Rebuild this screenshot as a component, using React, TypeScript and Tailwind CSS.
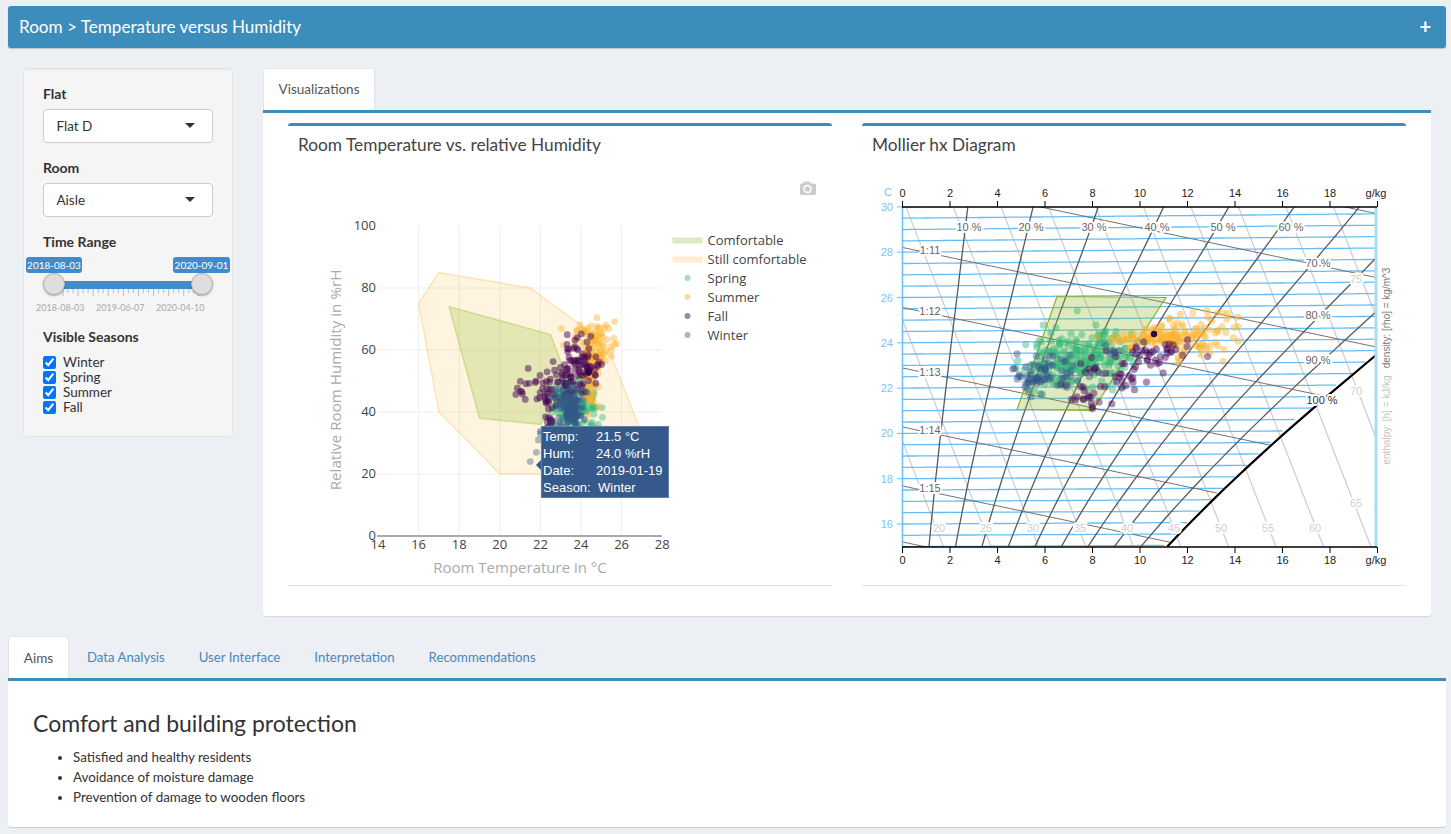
import React from "react";

function rng(seed: number) {
  let s = seed;
  return () => {
    s |= 0; s = (s + 0x6d2b79f5) | 0;
    let t = Math.imul(s ^ (s >>> 15), 1 | s);
    t = (t + Math.imul(t ^ (t >>> 7), 61 | t)) ^ t;
    return ((t ^ (t >>> 14)) >>> 0) / 4294967296;
  };
}
const r = rng(42);
const gauss = () => {
  const u = Math.max(r(), 1e-6), v = r();
  return Math.sqrt(-2 * Math.log(u)) * Math.cos(2 * Math.PI * v);
};
type Cl = [number, number, number, number, number];
const gen = (cls: Cl[]) => {
  const out: [number, number][] = [];
  cls.forEach(([cx, cy, sx, sy, n]) => {
    for (let i = 0; i < n; i++) out.push([cx + gauss() * sx, cy + gauss() * sy]);
  });
  return out;
};

const GREEN = "#35b779", ORANGE = "#fdb42f", PURPLE = "#440154", BLUE = "#34598a";

/* Left chart */
const LX = (t: number) => 378 + (t - 14) * 20.3;
const LY = (h: number) => 536 - h * 3.1;
const poly = (pts: number[][]) => pts.map(([a, b]) => `${LX(a)},${LY(b)}`).join(" ");
const L_SPRING = gen([[23.6, 42, 0.6, 4.2, 110], [23.2, 47, 0.35, 2, 18], [24.5, 41, 0.15, 4, 14]]);
const L_SUMMER = gen([[24.5, 56, 0.25, 5, 70], [24.9, 62, 0.55, 3.2, 50], [23.8, 65, 0.5, 2, 12], [24.5, 44, 0.15, 3, 10]]);
const L_FALL = gen([[23.8, 55, 0.55, 4.5, 85], [23, 47, 0.55, 2.4, 24], [21, 47, 0.25, 2.5, 8], [21.8, 51, 0.35, 2.2, 10], [22.4, 45, 0.35, 1.8, 12], [22.4, 37, 0.15, 2.5, 14]]);
const L_WINTER = gen([[23.5, 41, 0.3, 3.2, 110], [22.4, 33, 0.2, 3, 14], [23, 46, 0.2, 2, 8]]);

/* Mollier */
const MX = (g: number) => 902.5 + 23.75 * g;
const MY = (t: number) => 524 - (t - 16) * 22.65;
const xs = (T: number) => {
  const t = T - 15;
  return 11.15 * Math.exp(0.0798 * t - 0.00131 * t * t);
};
const TofY = (y: number) => (524 - y) / 22.65 + 16;
const rhPath = (rh: number) => {
  const p: string[] = [];
  for (let T = 15; T <= 31; T += 0.5) p.push(`${MX(rh * xs(T)).toFixed(1)},${MY(T).toFixed(1)}`);
  return p.join(" ");
};
const untilSat = (f: (g: number) => number) => {
  const p: string[] = [];
  for (let g = 0; g <= 20; g += 0.25) {
    const y = f(g);
    if (g > xs(TofY(y))) break;
    p.push(`${MX(g).toFixed(1)},${y.toFixed(1)}`);
  }
  return p.join(" ");
};
const ISO: string[] = [];
for (let T = 15; T <= 31; T += 0.5) ISO.push(untilSat((g) => MY(T) - (4.5 / 600) * T * g));
const DENS = [114, 178, 247.5, 307.5, 368, 427, 486, 542].map((y0) =>
  untilSat((g) => y0 + 0.21 * 23.75 * g)
);
const ENTH: number[] = [];
for (let h = 0; h <= 90; h += 5) ENTH.push(1228.6 + (h - 50) * 9.5);

const M_SPRING = gen([[1080, 358, 28, 15, 190], [1050, 372, 14, 11, 25], [1115, 340, 14, 6, 16]]);
const M_SUMMER = gen([[1160, 337, 18, 4, 80], [1198, 338, 20, 11, 60], [1210, 318, 14, 5, 10], [1130, 342, 14, 6, 12]]);
const M_FALL = gen([[1155, 352, 20, 6, 35], [1130, 375, 15, 10, 22], [1085, 398, 13, 7, 14], [1095, 375, 18, 12, 16]]);
const M_WINTER = gen([[1050, 372, 18, 10, 50], [1030, 378, 9, 6, 20], [1110, 345, 8, 6, 5]]);

const Dots = ({ pts, color, op = 0.45, rad = 3.4 }: { pts: [number, number][]; color: string; op?: number; rad?: number }) => (
  <g fill={color} fillOpacity={op}>
    {pts.map(([x, y], i) => (
      <circle key={i} cx={x} cy={y} r={rad} />
    ))}
  </g>
);
const toL = (p: [number, number][]) => p.map(([a, b]) => [LX(a), LY(b)] as [number, number]);

const LeftChart = () => (
  <div className="relative">
    <svg viewBox="288 170 544 416" width={544} height={416} className="block" style={{ fontFamily: "'Open Sans', sans-serif" }}>
      <g stroke="#eeeeee" strokeWidth={1}>
        {[16, 18, 20, 22, 24, 26].map((t) => (
          <line key={t} x1={LX(t)} x2={LX(t)} y1={226} y2={536} />
        ))}
        {[20, 40, 60, 80].map((h) => (
          <line key={h} x1={378} x2={662} y1={LY(h)} y2={LY(h)} />
        ))}
      </g>
      <polygon points={poly([[16, 75], [17, 85], [21.5, 80], [24, 68], [25.5, 58], [27, 33], [25, 20], [20, 20], [17, 40]])} fill="#fdb42f" fillOpacity={0.15} stroke="#fdb42f" strokeOpacity={0.3} strokeWidth={1.5} />
      <polygon points={poly([[17.5, 74], [22.5, 65], [23.5, 48], [22, 36], [19, 38]])} fill="#a6c84c" fillOpacity={0.3} stroke="#a6c84c" strokeOpacity={0.45} strokeWidth={1.5} />
      <Dots pts={toL(L_SPRING)} color={GREEN} />
      <Dots pts={toL(L_SUMMER)} color={ORANGE} />
      <Dots pts={toL(L_FALL)} color={PURPLE} op={0.5} />
      <Dots pts={toL(L_WINTER)} color={BLUE} />
      <Dots pts={[[LX(21.5), LY(24)], [LX(21.8), LY(27)], [LX(21.9), LY(31)], [LX(22), LY(33)]]} color={BLUE} op={0.4} />
      <circle cx={588.5} cy={372} r={3.4} fill="#2a0a4e" />
      <line x1={377} x2={662} y1={536} y2={536} stroke="#aaaaaa" strokeWidth={2} />
      <g fontSize={13} fill="#444444" textAnchor="end">
        {[0, 20, 40, 60, 80, 100].map((h) => (
          <text key={h} x={376} y={LY(h) + 4}>{h}</text>
        ))}
      </g>
      <g fontSize={13} fill="#444444" textAnchor="middle">
        {[14, 16, 18, 20, 22, 24, 26, 28].map((t) => (
          <text key={t} x={LX(t)} y={549}>{t}</text>
        ))}
      </g>
      <text x={520} y={573} textAnchor="middle" fontSize={15} fill="#aaaaaa">Room Temperature in °C</text>
      <text transform="translate(341 380) rotate(-90)" textAnchor="middle" fontSize={15.2} fill="#aaaaaa">Relative Room Humidity in %rH</text>
      <g fontSize={13} fill="#444444">
        {[
          ["Comfortable", 240], ["Still comfortable", 259], ["Spring", 278], ["Summer", 297], ["Fall", 316], ["Winter", 335],
        ].map(([t, y]) => (
          <text key={t as string} x={707.5} y={(y as number) + 5}>{t}</text>
        ))}
      </g>
      <rect x={672.5} y={237.5} width={30} height={6} fill="#dcebc0" />
      <rect x={672.5} y={256.5} width={30} height={6} fill="#fdeed2" />
      <circle cx={687.5} cy={278} r={3} fill="#a4dbc3" />
      <circle cx={687.5} cy={297} r={3} fill="#fedc9f" />
      <circle cx={687.5} cy={316} r={3} fill="#a285a9" />
      <circle cx={687.5} cy={335} r={3} fill="#a8b7cc" />
      <g fill="#cccccc">
        <path d="M803 183.5 l1.2 -2 h5.6 l1.2 2 h3.5 a1.5 1.5 0 0 1 1.5 1.5 v8.5 a1.5 1.5 0 0 1 -1.5 1.5 h-13 a1.5 1.5 0 0 1 -1.5 -1.5 v-8.5 a1.5 1.5 0 0 1 1.5 -1.5 z" />
      </g>
      <circle cx={807.5} cy={189} r={3.4} fill="none" stroke="#ffffff" strokeWidth={1.6} />
    </svg>
    <div className="absolute left-[253px] top-[256px] w-[128px] h-[72px] bg-[#34598a] border border-[#5f7fa8] text-white text-[13px] leading-[17px] pl-[1px] pt-[1px]" style={{ fontFamily: "'Liberation Sans', sans-serif" }}>
      <div className="flex"><span className="w-[53px]">Temp:</span><span>21.5 °C</span></div>
      <div className="flex"><span className="w-[53px]">Hum:</span><span>24.0 %rH</span></div>
      <div className="flex"><span className="w-[53px]">Date:</span><span>2019-01-19</span></div>
      <div className="flex"><span className="w-[55px]">Season:</span><span>Winter</span></div>
      <div className="absolute left-[-6px] top-[33px] w-0 h-0 border-y-[5px] border-y-transparent border-r-[5px] border-r-[#34598a]" />
    </div>
  </div>
);

const halo = { paintOrder: "stroke" as const, stroke: "#ffffff", strokeWidth: 4, strokeLinejoin: "round" as const };

const Mollier = () => {
  const ticks = [0, 2, 4, 6, 8, 10, 12, 14, 16, 18];
  return (
    <svg viewBox="862 170 544 416" width={544} height={416} className="block" style={{ fontFamily: "'Liberation Sans', sans-serif" }}>
      <defs>
        <clipPath id="mclip"><rect x={902.5} y={207} width={473.5} height={340} /></clipPath>
      </defs>
      <g clipPath="url(#mclip)" fill="none">
        {ENTH.map((x, i) => (
          <line key={i} x1={x} y1={547} x2={x - 0.39 * 400} y2={147} stroke="#cccccc" strokeWidth={1.2} />
        ))}
        {ISO.map((p, i) => (
          <polyline key={i} points={p} stroke="#66bef5" strokeWidth={1.3} />
        ))}
        {DENS.map((p, i) => (
          <polyline key={i} points={p} stroke="#707070" strokeWidth={1} />
        ))}
        {[0.1, 0.2, 0.3, 0.4, 0.5, 0.6, 0.7, 0.8, 0.9].map((rh) => (
          <polyline key={rh} points={rhPath(rh)} stroke="#5a5a5a" strokeWidth={1.3} />
        ))}
        <polyline points={rhPath(1)} stroke="#000000" strokeWidth={2.2} />
      </g>
      <polygon points="1057,296.5 1166,297.5 1092.5,410.5 1017,409.5" fill="#8db92e" fillOpacity={0.3} stroke="#8db32e" strokeWidth={1.2} />
      <Dots pts={M_SPRING} color={GREEN} rad={3.6} />
      <Dots pts={M_SUMMER} color={ORANGE} rad={3.6} />
      <Dots pts={M_FALL} color={PURPLE} rad={3.6} />
      <Dots pts={M_WINTER} color={BLUE} rad={3.6} />
      <circle cx={1154} cy={334} r={3.2} fill="#2a0a4e" />
      <line x1={902.5} x2={902.5} y1={207} y2={547} stroke="#66bef5" strokeWidth={1.5} />
      <line x1={1376} x2={1376} y1={207} y2={547} stroke="#a9dcf8" strokeWidth={3} />
      <line x1={902} x2={1377} y1={207} y2={207} stroke="#000000" strokeWidth={1.3} />
      <line x1={902} x2={1377} y1={547} y2={547} stroke="#000000" strokeWidth={1.3} />
      <g stroke="#000000" strokeWidth={1}>
        {[...ticks, 20].map((g) => (
          <React.Fragment key={g}>
            <line x1={MX(g)} x2={MX(g)} y1={201} y2={207} />
            <line x1={MX(g)} x2={MX(g)} y1={547} y2={553} />
          </React.Fragment>
        ))}
      </g>
      <g fontSize={11} fill="#222222" textAnchor="middle">
        {ticks.map((g) => (
          <React.Fragment key={g}>
            <text x={MX(g)} y={197}>{g}</text>
            <text x={MX(g)} y={564}>{g}</text>
          </React.Fragment>
        ))}
        <text x={1376} y={197}>g/kg</text>
        <text x={1376} y={564}>g/kg</text>
      </g>
      <g fontSize={11} fill="#7cc4f7" textAnchor="end" stroke="none">
        <text x={892} y={196}>C</text>
        {[30, 28, 26, 24, 22, 20, 18, 16].map((t) => (
          <React.Fragment key={t}>
            <text x={893} y={MY(t) + 4}>{t}</text>
            <line x1={897} x2={902} y1={MY(t)} y2={MY(t)} stroke="#66bef5" />
          </React.Fragment>
        ))}
      </g>
      <g fontSize={11} fill="#cfcfcf" textAnchor="middle" style={halo}>
        {[[20, 939], [25, 986], [30, 1033], [35, 1080], [40, 1127], [45, 1174], [50, 1221], [55, 1268], [60, 1315]].map(([h, x]) => (
          <text key={h} x={x} y={532}>{h}</text>
        ))}
        <text x={1356} y={507}>65</text>
        <text x={1356} y={395}>70</text>
        <text x={1356} y={283}>75</text>
      </g>
      <g fontSize={11} fill="#666666" textAnchor="middle" style={halo}>
        {[["1:11", 930, 254], ["1:12", 930, 315], ["1:13", 930, 376], ["1:14", 930, 434], ["1:15", 930, 492]].map(([t, x, y]) => (
          <text key={t as string} x={x as number} y={y as number}>{t}</text>
        ))}
        {[["10 %", 969, 231], ["20 %", 1031, 231], ["30 %", 1094, 231], ["40 %", 1157, 231], ["50 %", 1223, 231], ["60 %", 1291, 231], ["70 %", 1318, 267], ["80 %", 1318, 319], ["90 %", 1318, 364]].map(([t, x, y]) => (
          <text key={t as string} x={x as number} y={y as number}>{t}</text>
        ))}
        <text x={1322} y={404} fill="#333333">100 %</text>
      </g>
      <text transform="translate(1390 318) rotate(-90)" textAnchor="middle" fontSize={10} fill="#777777">density: [rho] = kg/m^3</text>
      <text transform="translate(1390 420) rotate(-90)" textAnchor="middle" fontSize={10} fill="#c4c4c4">enthalpy: [h] = kJ/kg</text>
    </svg>
  );
};

const SelectBox = ({ label, value }: { label: string; value: string }) => (
  <div className="mb-[15px]">
    <div className="text-[14px] leading-[20px] font-bold text-[#333] mb-[5px]">{label}</div>
    <div className="h-[34px] bg-white border border-[#cccccc] rounded-[4px] flex items-center justify-between pl-[12.5px] pr-[17px]">
      <span className="text-[13.5px] text-[#333]">{value}</span>
      <span className="w-0 h-0 border-x-[5px] border-x-transparent border-t-[5px] border-t-[#333] -mt-[2px]" />
    </div>
  </div>
);

const Slider = () => {
  const minor: number[] = [];
  for (let i = 0; i <= 27; i++) minor.push(i);
  return (
    <div className="relative h-[74px] w-[170px]">
      <div className="absolute left-[-17px] top-[5px] w-[56px] h-[16px] rounded-[3px] bg-[#428bca] text-white text-[10px] leading-[16px] text-center">2018-08-03</div>
      <div className="absolute left-[130px] top-[5px] w-[57px] h-[16px] rounded-[3px] bg-[#428bca] text-white text-[10px] leading-[16px] text-center">2020-09-01</div>
      <div className="absolute left-[11px] top-[29px] w-[148px] h-[8px] bg-[#428bca]" />
      <svg className="absolute left-[10px] top-[37px]" width={150} height={10}>
        {minor.map((i) => (
          <line key={i} x1={i * 5.03 + 10} x2={i * 5.03 + 10} y1={0} y2={i % 3 === 0 ? 7 : 4} stroke="#a9bfd6" strokeWidth={1} />
        ))}
      </svg>
      <div className="absolute left-[0px] top-[21px] w-[22px] h-[22px] rounded-full bg-[#dedede] border border-[#b5b5b5] shadow-[0_1px_2px_rgba(0,0,0,0.3)]" />
      <div className="absolute left-[148px] top-[21px] w-[22px] h-[22px] rounded-full bg-[#dedede] border border-[#b5b5b5] shadow-[0_1px_2px_rgba(0,0,0,0.3)]" />
      <div className="absolute left-[-7px] top-[50px] text-[9px] leading-[11px] text-[#aaaaaa] w-[42px] text-center whitespace-nowrap">2018-08-03</div>
      <div className="absolute left-[53px] top-[50px] text-[9px] leading-[11px] text-[#aaaaaa] w-[42px] text-center whitespace-nowrap">2019-06-07</div>
      <div className="absolute left-[113px] top-[50px] text-[9px] leading-[11px] text-[#aaaaaa] w-[42px] text-center whitespace-nowrap">2020-04-10</div>
    </div>
  );
};

const Sidebar = () => (
  <aside className="w-[210px] h-[369px] bg-[#f5f5f5] border border-[#e3e3e3] rounded-[4px] px-[19px] pt-[15px] shadow-[inset_0_1px_1px_rgba(0,0,0,0.05)] shrink-0">
    <SelectBox label="Flat" value="Flat D" />
    <SelectBox label="Room" value="Aisle" />
    <div className="text-[14px] leading-[20px] font-bold text-[#333]">Time Range</div>
    <Slider />
    <div className="text-[14px] leading-[20px] font-bold text-[#333] mt-[1px] mb-[8px]">Visible Seasons</div>
    {["Winter", "Spring", "Summer", "Fall"].map((s) => (
      <label key={s} className="flex items-center h-[15px] text-[13.5px] text-[#333]">
        <input type="checkbox" checked readOnly className="w-[13px] h-[13px] m-0 mr-[7px]" />
        {s}
      </label>
    ))}
  </aside>
);

const Box = ({ title, children }: { title: string; children: React.ReactNode }) => (
  <section className="w-[544px] h-[463px] bg-white border-t-[3px] border-t-[#3c8dbc] rounded-t-[3px] border-b border-b-[#e5e5e5]">
    <h3 className="text-[17.3px] leading-[20px] text-[#444] pl-[10px] pt-[9px] h-[44px]">{title}</h3>
    {children}
  </section>
);

const BottomTab = ({ t }: { t: string }) => (
  <span className="px-[17px] h-[42px] leading-[42px] text-[13.2px] text-[#4c86b6]">{t}</span>
);

export default function App() {
  return (
    <div className="w-[1451px] h-[834px] overflow-hidden bg-[#ecf0f5] pt-[6px]" style={{ fontFamily: "Lato, 'Noto Sans', sans-serif" }}>
      <header className="mx-[8px] w-[1438px] h-[42px] bg-[#3c8dbc] rounded-[3px] shadow-[0_1px_1px_rgba(0,0,0,0.2)] flex items-center justify-between pl-[11px] pr-[15px] text-white">
        <span className="text-[17.1px]">Room &gt; Temperature versus Humidity</span>
        <span className="text-[20px] font-bold leading-none -mt-[2px]">+</span>
      </header>
      <div className="flex pl-[23px] pt-[20px] gap-[30px]">
        <Sidebar />
        <main className="w-[1168px]">
          <div className="w-[112px] h-[42px] bg-white border border-[#e5e5e5] border-b-0 rounded-t-[4px] text-center leading-[41px] text-[13.5px] text-[#555]">Visualizations</div>
          <div className="h-[506px] bg-white border-t-[3px] border-t-[#3c8dbc] rounded-b-[3px] shadow-[0_1px_1px_rgba(0,0,0,0.1)] flex gap-[30px] pl-[25px] pt-[10px]">
            <Box title="Room Temperature vs. relative Humidity"><LeftChart /></Box>
            <Box title="Mollier hx Diagram"><Mollier /></Box>
          </div>
        </main>
      </div>
      <div className="mx-[8px] w-[1438px] mt-[20px]">
        <div className="flex h-[42px]">
          <span className="w-[61px] bg-white border border-[#e5e5e5] border-b-0 rounded-t-[4px] text-center leading-[42px] text-[13.5px] text-[#555] mr-[1px]">Aims</span>
          <BottomTab t="Data Analysis" />
          <BottomTab t="User Interface" />
          <BottomTab t="Interpretation" />
          <BottomTab t="Recommendations" />
        </div>
        <div className="h-[149px] bg-white border-t-[3px] border-t-[#3c8dbc] rounded-b-[3px] shadow-[0_1px_1px_rgba(0,0,0,0.15)] pl-[25px] pt-[29px]">
          <h2 className="text-[23px] leading-[26px] text-[#333]">Comfort and building protection</h2>
          <ul className="list-disc pl-[40px] mt-[11px] text-[13.4px] leading-[20px] text-[#333]">
            <li>Satisfied and healthy residents</li>
            <li>Avoidance of moisture damage</li>
            <li>Prevention of damage to wooden floors</li>
          </ul>
        </div>
      </div>
    </div>
  );
}
